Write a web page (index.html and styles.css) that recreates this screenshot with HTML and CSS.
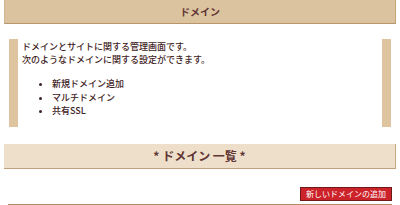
FILE: index.html
```html
<!DOCTYPE html>
<html lang="ja">
<head>
    <meta charset="UTF-8">
    <title>ドメイン</title>
    <link rel="stylesheet" href="styles.css">
</head>
<body>
    <div class="page-title">ドメイン</div>
    <div class="intro">
        <p>ドメインとサイトに関する管理画面です。<br>次のようなドメインに関する設定ができます。</p>
        <ul>
            <li>新規ドメイン追加</li>
            <li>マルチドメイン</li>
            <li>共有SSL</li>
        </ul>
    </div>
    <div class="section-title">* ドメイン 一覧 *</div>
    <div class="actions">
        <button class="btn-add">新しいドメインの追加</button>
    </div>
</body>
</html>
```

FILE: styles.css
```css
body {
    margin: 0;
    font-family: "Noto Sans CJK JP", "DejaVu Sans", sans-serif;
    color: #3e2222;
    background: #fff;
}

.page-title {
    margin: 0 4px;
    height: 23px;
    line-height: 23px;
    background: #dcc39f;
    border-bottom: 1px solid #b9946c;
    border-left: 1px solid #d2b58f;
    border-right: 1px solid #c8a47c;
    text-align: center;
    font-size: 10px;
    font-weight: bold;
    color: #5e3434;
}

.intro {
    margin: 15px 9px 0;
    height: 88px;
    box-sizing: border-box;
    border-left: 9px solid #dec49f;
    border-right: 9px solid #dec49f;
    padding: 1px 4px;
    font-size: 9px;
    font-weight: 500;
}

.intro p {
    margin: 0;
    line-height: 13.2px;
}

.intro ul {
    margin: 11px 0 0;
    padding-left: 30px;
    line-height: 13.2px;
}

.section-title {
    margin: 17px 4px 0;
    height: 24px;
    line-height: 24px;
    background: #eddfca;
    border-bottom: 1px solid #c2a07e;
    border-right: 1px solid #c8a886;
    text-align: center;
    font-size: 12px;
    font-weight: bold;
    color: #5e3434;
}

.actions {
    margin: 0 8px;
    padding: 18px 0 3px;
    display: flex;
    justify-content: flex-end;
    border-bottom: 2px solid #b48c64;
}

.btn-add {
    height: 14px;
    padding: 0 5px;
    background: #cc2229;
    border: 1px solid #6e1a1a;
    color: #fff;
    font-family: inherit;
    font-size: 8px;
    line-height: 12px;
}
```
